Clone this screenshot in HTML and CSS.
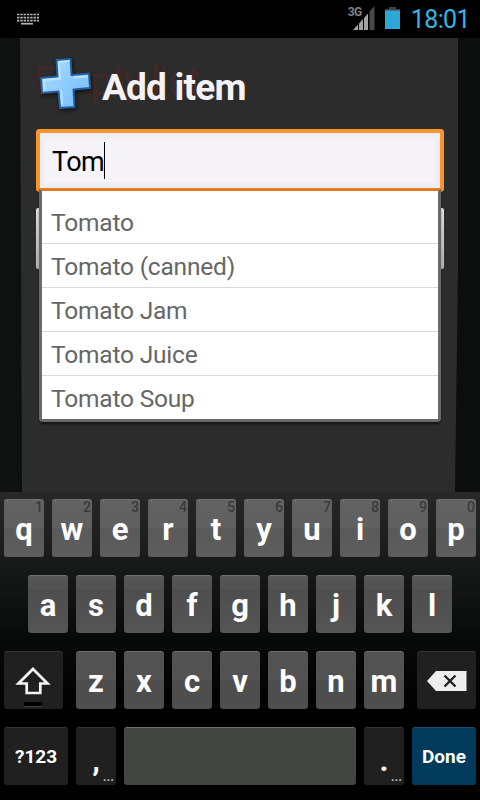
FILE: index.html
```html
<!DOCTYPE html>
<html lang="en">
<head>
    <meta charset="UTF-8">
    <meta name="viewport" content="width=device-width, initial-scale=1.0">
    <title>Add item</title>
    <link rel="stylesheet" href="styles.css">
</head>
<body>

<div class="status-bar">
    <svg class="kb-icon" width="22" height="12" viewBox="0 0 22 12">
        <path d="M0 1.500h22M0 4.700h22M0 7.700h22" stroke="#b4b4b4" stroke-width="1.700" stroke-dasharray="2.400 .9"/>
        <path d="M4 10.700h12" stroke="#b4b4b4" stroke-width="1.700"/>
    </svg>
    <div class="status-right">
        <span class="network">3G</span>
        <svg class="signal" width="22" height="24" viewBox="0 0 22 24">
            <path d="M0 24L5 18.500V24zM6 24V17.500L10 13V24zM11 24V12L15 7.500V24z" fill="#a3a3a3"/>
            <path d="M16.500 24V5.500L21.500 0V24z" fill="#484848"/>
        </svg>
        <svg class="battery" width="15" height="22" viewBox="0 0 15 22">
            <path d="M4 0h7v2h4v2H0V2h4z" fill="#484248"/>
            <path d="M0 3.500h15V22H0z" fill="#2ba8d8"/>
        </svg>
        <span class="clock">18:01</span>
    </div>
</div>

<div class="screen">
    <div class="paper">
        <div class="empty-text">Empty list</div>
        <div class="title">
            <svg class="plus" width="56" height="56" viewBox="0 0 56 56">
                <defs>
                    <linearGradient id="plusFill" x1="0" y1="0" x2="1" y2="1">
                        <stop offset="0" stop-color="#a9dbff"/>
                        <stop offset="1" stop-color="#74bdfa"/>
                    </linearGradient>
                </defs>
                <path d="M19.500 4L33.500 3L34.500 19L52 17.500L53 32L36.500 33.500L37.500 51L23 52L21.500 35.500L5 37L4 22L20.500 20.500z" fill="url(#plusFill)" stroke="#235e9d" stroke-width="2" stroke-linejoin="round"/>
                <path d="M22 6L32 5M22 6L23 22.500L7 24L7.500 33M37 21.500L50 20.500M24.500 35L25 48" fill="none" stroke="#c8eaff" stroke-width="2" stroke-linecap="round" opacity=".75"/>
            </svg>
            <h1>Add item</h1>
        </div>
        <div class="input">
            <span class="value">Tom</span><span class="caret"></span>
        </div>
        <div class="button"></div>
        <ul class="suggestions">
            <li>Tomato</li>
            <li>Tomato (canned)</li>
            <li>Tomato Jam</li>
            <li>Tomato Juice</li>
            <li>Tomato Soup</li>
        </ul>
    </div>
</div>

<div class="keyboard">
    <div class="row row-1">
        <div class="key"><sup>1</sup>q</div>
        <div class="key"><sup>2</sup>w</div>
        <div class="key"><sup>3</sup>e</div>
        <div class="key"><sup>4</sup>r</div>
        <div class="key"><sup>5</sup>t</div>
        <div class="key"><sup>6</sup>y</div>
        <div class="key"><sup>7</sup>u</div>
        <div class="key"><sup>8</sup>i</div>
        <div class="key"><sup>9</sup>o</div>
        <div class="key"><sup>0</sup>p</div>
    </div>
    <div class="row row-2">
        <div class="key">a</div>
        <div class="key">s</div>
        <div class="key">d</div>
        <div class="key">f</div>
        <div class="key">g</div>
        <div class="key">h</div>
        <div class="key">j</div>
        <div class="key">k</div>
        <div class="key">l</div>
    </div>
    <div class="row row-3">
        <div class="key dark shift">
            <svg width="36" height="28" viewBox="0 0 36 28">
                <path d="M18 2L32.500 16.500H25.300V26H11.700V16.500H3.500z" fill="none" stroke="#f4f4f4" stroke-width="2.700"/>
            </svg>
        </div>
        <div class="key">z</div>
        <div class="key">x</div>
        <div class="key">c</div>
        <div class="key">v</div>
        <div class="key">b</div>
        <div class="key">n</div>
        <div class="key">m</div>
        <div class="key dark delete">
            <svg width="40" height="20" viewBox="0 0 40 20">
                <path d="M0 10L9 0H39.500V20H9z" fill="#eee"/>
                <path d="M17.500 4.500L28.500 15.500M28.500 4.500L17.500 15.500" stroke="#222" stroke-width="2.400"/>
            </svg>
        </div>
    </div>
    <div class="row row-4">
        <div class="key dark symbols">?123</div>
        <div class="key dark more">,</div>
        <div class="key space"></div>
        <div class="key dark more">.</div>
        <div class="key done">Done</div>
    </div>
</div>

</body>
</html>
```

FILE: styles.css
```css
* {
    box-sizing: border-box;
}
body {
    margin: 0;
    width: 480px;
    height: 800px;
    overflow: hidden;
    background: #000;
    color: #fff;
    font-family: Roboto, sans-serif;
}
.status-bar {
    height: 38px;
    padding: 0 10px 0 17px;
    display: flex;
    justify-content: space-between;
    background: #000;
}
.kb-icon {
    margin-top: 13px;
}
.status-right {
    display: flex;
    align-items: flex-start;
}
.network {
    margin: 6px -9px 0 0;
    font-size: 12px;
    line-height: 13px;
    font-weight: 700;
    letter-spacing: -0.5px;
    color: #808080;
}
.signal {
    margin-top: 6px;
}
.battery {
    margin: 7px 0 0 10px;
}
.clock {
    margin: 5px 0 0 11px;
    font-size: 25px;
    line-height: 29px;
    letter-spacing: -0.6px;
    color: #33b5e5;
}
.screen {
    height: 454px;
    padding-left: 20px;
    background: linear-gradient(to right, #101411, #0c110f 20px, #0c0d0d 455px, #0d100f);
}
.paper {
    position: relative;
    width: 438px;
    height: 454px;
    padding: 18px 14px 0 16px;
    background: #2b2c2b;
    clip-path: polygon(0 0, 438px 0, 438px 230px, 435px 454px, 2px 454px);
}
.empty-text {
    position: absolute;
    left: 14px;
    top: 18px;
    font-size: 40px;
    line-height: 52px;
    font-weight: 400;
    letter-spacing: -1px;
    color: #422826;
    white-space: nowrap;
}
.title {
    position: relative;
    height: 73px;
    display: flex;
}
.plus {
    margin-left: 1px;
    filter: drop-shadow(1px 2px 2px #111);
}
.title h1 {
    margin: 10px 0 0 9px;
    font-size: 37px;
    line-height: 43px;
    font-weight: 700;
    letter-spacing: -0.8px;
    color: #f4f2f4;
}
.input {
    height: 63px;
    display: flex;
    align-items: center;
    padding: 2px 12px 0;
    border: 4px solid #f9942a;
    border-bottom-color: #ee7e1c;
    border-radius: 4px;
    background: #f5f3f7;
    box-shadow: inset 0 0 0 5px #efeef2;
    font-size: 27px;
    letter-spacing: -0.6px;
    color: #000;
}
.caret {
    width: 1px;
    height: 37px;
    margin-top: -3px;
    background: #000;
}
.button {
    height: 61px;
    margin-top: 16px;
    border-radius: 2px;
    background: linear-gradient(#e0e0e0, #b4b4b4);
}
.suggestions {
    position: absolute;
    left: 19px;
    top: 151px;
    width: 402px;
    height: 233px;
    margin: 0;
    padding: 9px 0 0;
    list-style: none;
    background: #fff;
    border: 3px solid #696b69;
    border-top: 2px solid #dc7b2c;
    border-radius: 0 0 4px 4px;
    box-shadow: 0 3px 3px -1px #111;
}
.suggestions li {
    height: 44px;
    padding: 1px 10px 0 9px;
    font-size: 24.500px;
    line-height: 43px;
    letter-spacing: -0.2px;
    color: #666;
    border-bottom: 1px solid #d8d8d8;
}
.suggestions li:last-child {
    border-bottom: none;
}
.keyboard {
    height: 308px;
    padding: 7px 4px 0;
    display: flex;
    flex-direction: column;
    gap: 18px;
    background: linear-gradient(#272827, #181b1a 70px, #080a09 145px, #000 220px);
}
.row {
    display: flex;
    justify-content: space-between;
}
.row-2 {
    padding: 0 24px;
}
.row-3, .row-4 {
    justify-content: flex-start;
    gap: 8px;
}
.key {
    position: relative;
    width: 40px;
    height: 58px;
    padding-top: 2px;
    display: flex;
    align-items: center;
    justify-content: center;
    border-radius: 3px;
    border-top: 1px solid #717171;
    background: linear-gradient(#535353 50%, #4e4e4e 50%);
    font-size: 31px;
    font-weight: 700;
}
.row-1 .key {
    background: linear-gradient(#636263, #606060 50%, #595a59 50%, #5d5d5d);
}
.row-2 .key {
    background: linear-gradient(#565656, #525252 25%, #4d4e4d 25%, #555);
}
.key sup {
    position: absolute;
    top: 0;
    right: 1px;
    font-size: 14px;
    line-height: 15px;
    font-weight: 500;
    color: #3b3b3b;
}
.row .dark {
    background: #202020;
    border-top-color: #343434;
}
.shift {
    width: 59px;
    margin-right: 5px;
    padding: 0 1px 0 0;
}
.shift::after {
    content: "";
    position: absolute;
    left: 20px;
    bottom: 2px;
    width: 18px;
    height: 4px;
    background: #000;
    border-bottom: 1px solid #444;
}
.delete {
    width: 59px;
    margin-left: 5px;
    padding-top: 0;
}
.symbols {
    width: 64px;
    padding-top: 0;
    font-size: 19px;
}
.more {
    padding-top: 8px;
}
.more::after {
    content: "...";
    position: absolute;
    right: 2px;
    bottom: 2px;
    font-size: 13px;
    line-height: 13px;
    font-weight: 700;
    color: #bbb;
}
.row .space {
    width: 232px;
    background: #434543;
}
.row .done {
    width: 64px;
    padding-top: 0;
    font-size: 19px;
    background: #013a5b;
    border-top-color: #1c4d69;
}
```
